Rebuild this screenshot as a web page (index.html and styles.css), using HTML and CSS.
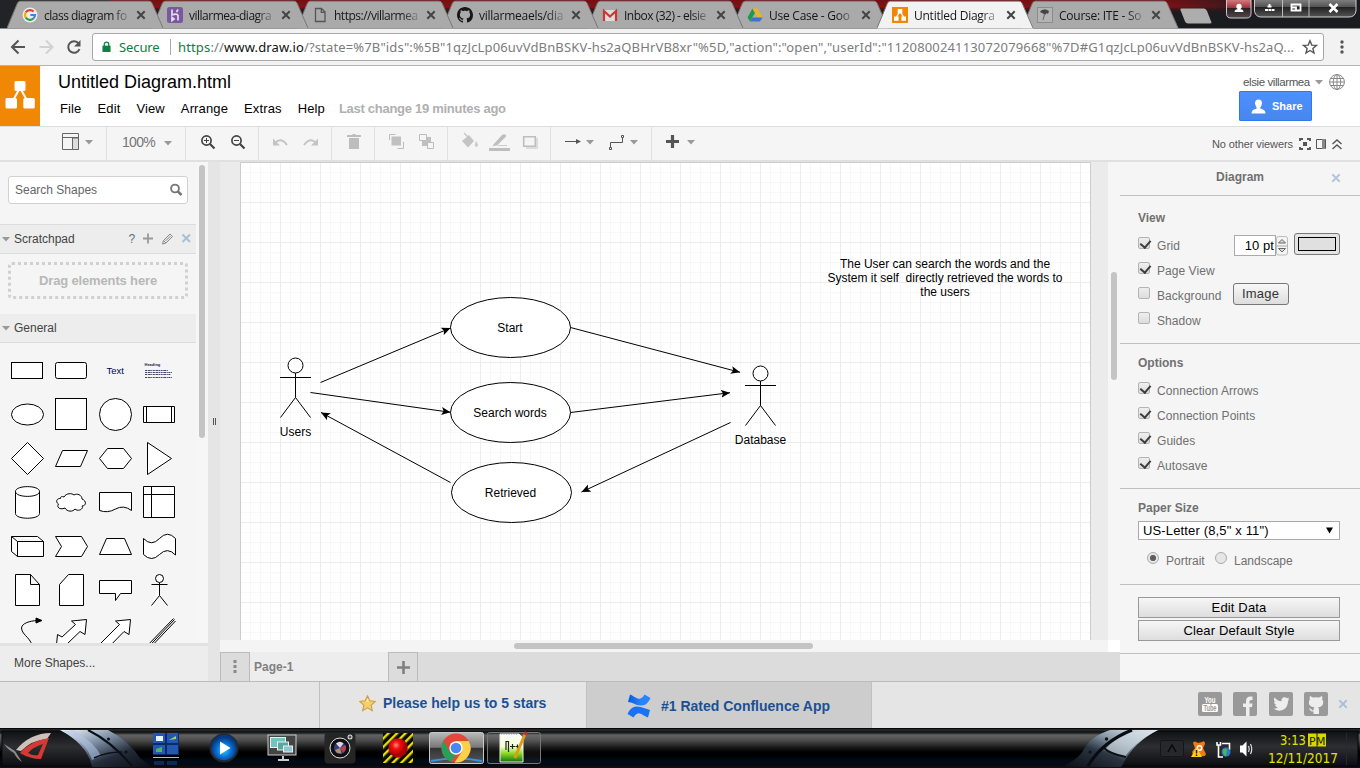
FILE: index.html
```html
<!DOCTYPE html>
<html lang="en">
<head>
<meta charset="utf-8">
<title>Untitled Diagram.html</title>
<link rel="stylesheet" href="styles.css">
</head>
<body>
<svg width="0" height="0" class="defs" aria-hidden="true">
  <defs>
    <symbol id="tab" viewBox="0 0 157 29"><path d="M0 28.5 L10.5 3 Q11.5 1 13.5 1 H142 Q144 1 145 3 L156.5 28.5Z" fill="currentColor"/><path d="M0 28 L10.5 3 Q11.5 1.2 13.5 1.2 H142 Q144 1.2 145 3 L156 28" fill="none" stroke="#777" stroke-width="1"/></symbol>
    <symbol id="x" viewBox="0 0 10 10"><path d="M1.3 1.3 L8.7 8.7 M8.7 1.3 L1.3 8.7" stroke="currentColor" stroke-width="2" fill="none"/></symbol>
    <symbol id="drawio" viewBox="0 0 16 16"><rect width="16" height="16" fill="#f08705"/><path d="M8 4 L4 11 M8 4 L12 11" stroke="#fff" stroke-width="1.4"/><path d="M5.7 2h4.6v4.4H5.7zM2 9.4h4.6v4.4H2zM9.4 9.4H14v4.4H9.4z" fill="#fff"/></symbol>
    <symbol id="caret" viewBox="0 0 8 5"><path d="M0 0H8L4 4.5Z" fill="currentColor"/></symbol>
    <symbol id="github" viewBox="0 0 16 16"><path fill="currentColor" d="M8 0C3.58 0 0 3.58 0 8c0 3.54 2.29 6.53 5.47 7.59.4.07.55-.17.55-.38 0-.19-.01-.82-.01-1.49-2.01.37-2.53-.49-2.69-.94-.09-.23-.48-.94-.82-1.13-.28-.15-.68-.52-.01-.53.63-.01 1.08.58 1.23.82.72 1.21 1.87.87 2.33.66.07-.52.28-.87.51-1.07-1.78-.2-3.64-.89-3.64-3.95 0-.87.31-1.59.82-2.15-.08-.2-.36-1.02.08-2.12 0 0 .67-.21 2.2.82.64-.18 1.32-.27 2-.27s1.36.09 2 .27c1.53-1.04 2.2-.82 2.2-.82.44 1.1.16 1.92.08 2.12.51.56.82 1.27.82 2.15 0 3.07-1.87 3.75-3.65 3.95.29.25.54.73.54 1.48 0 1.07-.01 1.93-.01 2.2 0 .21.15.46.55.38A8.01 8.01 0 0 0 16 8c0-4.42-3.58-8-8-8z"/></symbol>
    <linearGradient id="steel" x1="0" y1="0" x2="1" y2="1"><stop offset="0" stop-color="#f4f8fc"/><stop offset=".35" stop-color="#8092a8"/><stop offset=".65" stop-color="#232c3a"/><stop offset="1" stop-color="#0a0c12"/></linearGradient>
    <linearGradient id="steelR" x1="1" y1="0" x2="0" y2="1"><stop offset="0" stop-color="#f4f8fc"/><stop offset=".35" stop-color="#8c9cac"/><stop offset=".6" stop-color="#2a3440"/><stop offset="1" stop-color="#0a0c12"/></linearGradient>
    <linearGradient id="shell" x1="0" y1="0" x2="0" y2="1"><stop offset="0" stop-color="#101114"/><stop offset=".45" stop-color="#2c2e32"/><stop offset="1" stop-color="#0c0d10"/></linearGradient>
    <linearGradient id="glass" x1="0" y1="0" x2="0" y2="1"><stop offset="0" stop-color="#bbb"/><stop offset=".48" stop-color="#777"/><stop offset=".5" stop-color="#333"/><stop offset="1" stop-color="#555"/></linearGradient>
    <linearGradient id="winbtn" x1="0" y1="0" x2="0" y2="1"><stop offset="0" stop-color="#8a8a8a"/><stop offset=".45" stop-color="#555"/><stop offset=".5" stop-color="#222"/><stop offset="1" stop-color="#555"/></linearGradient>
    <linearGradient id="redbtn" x1="0" y1="0" x2="0" y2="1"><stop offset="0" stop-color="#e08a8e"/><stop offset=".5" stop-color="#9c3038"/><stop offset=".52" stop-color="#2a2024"/><stop offset="1" stop-color="#55484c"/></linearGradient>
    <radialGradient id="play" cx=".5" cy=".6"><stop offset="0" stop-color="#22d0ff"/><stop offset=".6" stop-color="#0a6ad0"/><stop offset="1" stop-color="#063a80"/></radialGradient>
    <radialGradient id="redball" cx=".4" cy=".35"><stop offset="0" stop-color="#ff8a7a"/><stop offset=".4" stop-color="#f41010"/><stop offset="1" stop-color="#a80000"/></radialGradient>
    <pattern id="hazard" width="6" height="6" patternUnits="userSpaceOnUse" patternTransform="rotate(45)"><rect width="6" height="6" fill="#0a0a00"/><rect width="2.4" height="6" fill="#e8e000"/></pattern>
    <linearGradient id="confl" x1="0" y1="0" x2="1" y2="0"><stop offset="0" stop-color="#0a5adf"/><stop offset=".6" stop-color="#2684ff"/></linearGradient>
    <linearGradient id="np" x1="0" y1="0" x2="0" y2="1"><stop offset="0" stop-color="#fff"/><stop offset=".45" stop-color="#f0ffd0"/><stop offset=".7" stop-color="#8ad820"/><stop offset="1" stop-color="#107010"/></linearGradient>
    <pattern id="minor" x="240" y="162" width="10" height="10" patternUnits="userSpaceOnUse"><path d="M.5 0V10M0 .5H10" stroke="#f7f7f7"/></pattern>
    <pattern id="major" x="240" y="162" width="40" height="40" patternUnits="userSpaceOnUse"><path d="M.5 0V40M0 .5H40" stroke="#ececec"/></pattern>
    <marker id="arrow" markerUnits="userSpaceOnUse" markerWidth="10" markerHeight="9" refX="9" refY="4.5" orient="auto"><path d="M0 .5 L9 4.5 L0 8.5 L2 4.5Z" fill="#000"/></marker>
  </defs>
</svg>

<div class="tabstrip">
  <div class="tabs">
    <div class="tab t1"><svg class="tab-shape"><use href="#tab"/></svg>
      <svg class="favicon" viewBox="0 0 16 16"><circle cx="8" cy="8" r="7.5" fill="#eee"/><g fill="none" stroke-width="2.2"><path d="M11.6 4.6A5 5 0 0 0 3.8 5.3" stroke="#dd4437"/><path d="M3.8 5.3a5 5 0 0 0 0 5.4" stroke="#f0b400"/><path d="M3.8 10.7a5 5 0 0 0 7.6.8" stroke="#2a9d50"/><path d="M11.4 11.5A5 5 0 0 0 13 8H8.3" stroke="#4080e8"/></g></svg>
      <span class="tab-title">class diagram fo</span><svg class="tab-close"><use href="#x"/></svg></div>
    <div class="tab t2"><svg class="tab-shape"><use href="#tab"/></svg>
      <svg class="favicon" viewBox="0 0 16 16"><rect width="16" height="16" rx="2.5" fill="#79589f"/><path d="M5 2.5V8q5-2 6 .5V13.500M11 2.500L9.500 5M5 10.500L7 12 5 13.500Z" stroke="#e6def0" stroke-width="1.700" fill="none"/></svg>
      <span class="tab-title">villarmea-diagra</span><svg class="tab-close"><use href="#x"/></svg></div>
    <div class="tab t3"><svg class="tab-shape"><use href="#tab"/></svg>
      <svg class="favicon" viewBox="0 0 16 16"><path d="M3.500 1.500H9.500L13 5V14.500H3.500ZM9.300 1.500V5.300H13" fill="none" stroke="#555" stroke-width="1.300"/></svg>
      <span class="tab-title">https://villarmea</span><svg class="tab-close"><use href="#x"/></svg></div>
    <div class="tab t4"><svg class="tab-shape"><use href="#tab"/></svg>
      <svg class="favicon gh"><use href="#github"/></svg>
      <span class="tab-title">villarmeaels/dia</span><svg class="tab-close"><use href="#x"/></svg></div>
    <div class="tab t5"><svg class="tab-shape"><use href="#tab"/></svg>
      <svg class="favicon" viewBox="0 0 16 16"><path d="M1 3H15V14H1Z" fill="#ddd"/><path d="M2 14V4L8 9.500 14 4V14" fill="none" stroke="#c8392f" stroke-width="2.200"/></svg>
      <span class="tab-title">Inbox (32) - elsie</span><svg class="tab-close"><use href="#x"/></svg></div>
    <div class="tab t6"><svg class="tab-shape"><use href="#tab"/></svg>
      <svg class="favicon" viewBox="0 0 16 16"><path d="M5.500 1.500L.5 10.500 3 14.500 8 5.800Z" fill="#1c9a50"/><path d="M5.500 1.500H10.500L15.500 10.500H10.500Z" fill="#e8b52a"/><path d="M5.500 10.500H15.500L13 14.500H3Z" fill="#3d72d0"/></svg>
      <span class="tab-title">Use Case - Goo</span><svg class="tab-close"><use href="#x"/></svg></div>
    <div class="tab t7 active"><svg class="tab-shape"><use href="#tab"/></svg>
      <svg class="favicon"><use href="#drawio"/></svg>
      <span class="tab-title">Untitled Diagra</span><svg class="tab-close"><use href="#x"/></svg></div>
    <div class="tab t8"><svg class="tab-shape"><use href="#tab"/></svg>
      <svg class="favicon" viewBox="0 0 16 16"><rect width="16" height="16" fill="#8b8b8b"/><rect x="1" y="1" width="14" height="14" fill="#b4b4b4"/><path d="M3 5Q4 2 9 2.500L12 4 11 7 9.500 6 8 8 7 7Z" fill="#444"/><path d="M7.500 7L6 13" stroke="#666"/></svg>
      <span class="tab-title">Course: ITE - So</span><svg class="tab-close"><use href="#x"/></svg></div>
    <svg class="newtab" viewBox="0 0 34 16"><path d="M2 .5H25Q27 .5 28 3L32.500 14.500Q32.500 15.500 31 15.500H9Q7 15.500 6 13.500L1.500 2Q1.200.5 2 .5Z" fill="#adadad"/></svg>
  </div>
  <svg class="winctl" viewBox="1224 0 136 20" width="136" height="20">
    <path d="M1226.500 -2V13.500Q1226.500 18 1231 18H1246.500Q1251 18 1251 13.500V-2Z" fill="url(#redbtn)" stroke="#ccc"/>
    <circle cx="1239" cy="6.500" r="2.700" fill="#fff"/><path d="M1234.500 12Q1234.500 9 1239 9T1243.500 12Z" fill="#fff"/>
    <path d="M1254.500 -2V11.500Q1256 17 1261 17H1349Q1355 17 1356 11V-2Z" fill="url(#winbtn)" stroke="#ccc"/>
    <path d="M1282.500 0V17M1309 0V17" stroke="#bbb"/>
    <path d="M1265 10H1268M1268.500 10H1271M1271.500 10H1274.500M1267.500 6.500H1271.500M1269.500 4V6" stroke="#fff" stroke-width="1.800"/>
    <path d="M1291.500 4.500H1300.500V10.500H1291.500ZM1291.500 7.500H1296V10.500" fill="none" stroke="#fff" stroke-width="1.800"/>
    <path d="M1329.500 4L1337.500 12M1337.500 4L1329.500 12" stroke="#fff" stroke-width="2.600"/>
  </svg>
</div>

<div class="navbar">
  <svg class="nav-icons" viewBox="0 29 92 36" width="92" height="36"><g fill="none" stroke-width="2"><path d="M25 47H12.500M18.500 40.500L12 47L18.500 53.500" stroke="#555"/><path d="M39.500 47H52M46 40.500L52.500 47L46 53.500" stroke="#d2d2d2"/><path d="M78.700 43.500A5.800 5.800 0 1 0 79.500 49" stroke="#555"/></g><path d="M80.500 40V46.500H74Z" fill="#555"/></svg>
  <div class="omnibox">
    <svg viewBox="0 0 10 13" width="9" height="12"><path d="M.5 5H9.500V12H.5Z" fill="#0b8043"/><path d="M2.500 5.500V3.500a2.500 2.500 0 0 1 5 0V5.500" fill="none" stroke="#0b8043" stroke-width="1.400"/></svg>
    <span class="secure">Secure</span><span class="bar"></span>
    <span class="url"><span class="g">https</span>://<span class="k">www.draw.io</span>/?state=%7B"ids":%5B"1qzJcLp06uvVdBnBSKV-hs2aQBHrVB8xr"%5D,"action":"open","userId":"112080024113072079668"%7D#G1qzJcLp06uvVdBnBSKV-hs2aQ...</span>
    <svg class="star" viewBox="0 0 16 16" width="16" height="16"><path d="M8 1.800L9.800 6.100 14.400 6.400 10.900 9.400 12 14 8 11.500 4 14 5.100 9.400 1.600 6.400 6.200 6.100Z" fill="none" stroke="#555" stroke-width="1.400"/></svg>
  </div>
  <svg viewBox="0 0 4 16" width="4" height="16"><g fill="#555"><circle cx="2" cy="3" r="1.700"/><circle cx="2" cy="8" r="1.700"/><circle cx="2" cy="13" r="1.700"/></g></svg>
</div>

<header class="header">
  <svg class="logo" viewBox="0 66 40 60" width="40" height="60"><rect y="66" width="40" height="60" fill="#f08705"/><path d="M20 88L12 102M20 88L28 102" stroke="#fff" stroke-width="2"/><g fill="#fff"><rect x="14.500" y="81" width="11" height="10" rx="1.500"/><rect x="5.500" y="98" width="11.500" height="10.500" rx="1.500"/><rect x="23.300" y="98" width="11.500" height="10.500" rx="1.500"/></g></svg>
  <div class="titles">
    <div class="doc-title">Untitled Diagram.html</div>
    <nav class="menu"><span>File</span><span>Edit</span><span>View</span><span>Arrange</span><span>Extras</span><span>Help</span><span class="status">Last change 19 minutes ago</span></nav>
  </div>
  <div class="account">
    <div class="user"><span class="user-name">elsie villarmea</span><svg class="caret"><use href="#caret"/></svg>
      <svg viewBox="0 0 16 16" width="16" height="16"><g fill="none" stroke="#888"><circle cx="8" cy="8" r="7.400"/><ellipse cx="8" cy="8" rx="3.700" ry="7.400"/><path d="M8 .5V15.500M.5 8H15.500M1.800 4.500H14.200M1.800 11.500H14.200"/></g></svg></div>
    <div class="share"><svg viewBox="0 0 15 15" width="15" height="15"><path d="M7.500 .5Q11 .5 11 4.500Q10.500 7 9.300 8.500V9.500Q14.500 10.500 14.500 14.500H.5Q.5 10.500 5.700 9.500V8.500Q4.500 7 4 4.500Q4 .5 7.500 .5Z" fill="#fff"/></svg><span>Share</span></div>
  </div>
</header>

<div class="toolbar">
  <div class="tgroup g1"><svg viewBox="62 133 18 18" width="18" height="18"><g fill="none" stroke="#666"><path d="M62.500 133.500H78.500V149.500H62.500ZM62.500 137.500H78.500"/></g><path d="M72.500 138V149.500H78.500V138Z" fill="#ddd" stroke="#666"/></svg><svg class="caret"><use href="#caret"/></svg></div>
  <div class="tgroup g2"><span class="zoom">100%</span><svg class="caret"><use href="#caret"/></svg></div>
  <div class="tgroup"><svg viewBox="186 127 72 33" width="72" height="33"><g fill="none" stroke="#444" stroke-width="1.700"><circle cx="206.500" cy="140.500" r="4.600"/><circle cx="236.500" cy="140.500" r="4.600"/></g><path d="M210 144L214.500 148.500M240 144L244.500 148.500" stroke="#444" stroke-width="2.200"/><path d="M204 140.500H209M206.500 138V143M234 140.500H239" stroke="#444"/></svg></div>
  <div class="tgroup"><svg viewBox="259 127 72 33" width="72" height="33"><g fill="none" stroke="#c4c4c4" stroke-width="2"><path d="M276 142Q282 137.500 287 145"/><path d="M315 142Q309 137.500 304 145"/></g><path d="M273 138.500V145.500H280ZM318 138.500V145.500H311Z" fill="#c4c4c4"/></svg></div>
  <div class="tgroup"><svg viewBox="332 127 42 33" width="42" height="33"><path d="M347 135H352L353 134H355L356 135H361V137H347ZM349 138H359V149H349Z" fill="#bdbdbd"/></svg></div>
  <div class="tgroup"><svg viewBox="375 127 72 33" width="72" height="33"><path d="M391.500 136.500H401V145.500H391.500ZM422 137H431V146H422Z" fill="#c0c0c0"/><g stroke="#bcbcbc"><path d="M389.500 140V134.500H395.500M403.500 142V148.500H397.500" fill="none"/><path d="M419.500 134.500H426.500V140.500H419.500ZM427.500 142.500H433.500V148.500H427.500Z" fill="#f5f5f5"/></g></svg></div>
  <div class="tgroup"><svg viewBox="448 127 102 33" width="102" height="33"><path d="M462 141L469 135 474 141 468 147.500Z" fill="#c4c4c4"/><path d="M464 133L469 138" stroke="#c4c4c4" stroke-width="1.300"/><path d="M476 141Q479 145 477.500 146.500T474.500 145Z" fill="#ccc"/><path d="M489 148H510V151H489ZM493 145L502 135Q505 133 506.500 136L497 145.500 492.500 146Z" fill="#bebebe"/><path d="M498 145.500H507" stroke="#ccc"/><path d="M526 138H538V149H526Z" fill="#dcdcdc"/><path d="M523.700 136.700H535.300V146.300H523.700Z" fill="#f5f5f5" stroke="#bebebe" stroke-width="1.600"/></svg></div>
  <div class="tgroup"><svg viewBox="551 127 100 33" width="100" height="33"><path d="M565 141.500H577" stroke="#555"/><path d="M576 139L581 141.500 576 144Z" fill="#555"/><path d="M610.500 147V142.500H622.500V138" fill="none" stroke="#555"/><path d="M609.500 147.500H611.500V149.500H609.500ZM621.500 135.500H623.500V137.500H621.500Z" fill="none" stroke="#555"/><path d="M586 140H594L590 144.500ZM630 140H638L634 144.500Z" fill="#999"/></svg></div>
  <div class="tgroup last"><svg viewBox="652 127 60 33" width="60" height="33"><path d="M666 141.500H679M672.500 135V148" stroke="#555" stroke-width="3.200"/><path d="M687 140H695L691 144.500Z" fill="#999"/></svg></div>
  <div class="viewers"><span>No other viewers</span><svg viewBox="1298 136 46 16" width="46" height="16"><path d="M1300 141V139H1303M1307 139H1310V141M1300 147V149H1303M1307 149H1310V147" fill="none" stroke="#555" stroke-width="1.800"/><rect x="1303" y="142" width="4" height="4" fill="#555"/><path d="M1316.500 139.500H1325.500V148.500H1316.500Z" fill="none" stroke="#555"/><path d="M1322 139H1325V149H1322Z" fill="#888"/><path d="M1332.500 144L1337 140 1341.500 144M1332.500 149L1337 145 1341.500 149" fill="none" stroke="#555" stroke-width="1.400"/></svg></div>
</div>

<main class="workspace">
  <aside class="sidebar">
    <div class="side-body">
      <div class="side-content">
        <div class="search"><span>Search Shapes</span><svg viewBox="0 0 14 14" width="14" height="14"><circle cx="6" cy="5.500" r="3.900" fill="none" stroke="#777" stroke-width="1.900"/><path d="M8.800 8.300L12.500 12" stroke="#777" stroke-width="2.600"/></svg></div>
        <div class="section-title first"><svg class="caret"><use href="#caret"/></svg><span>Scratchpad</span>
          <svg class="pad-tools" viewBox="126 231 68 14" width="68" height="14"><path d="M143 237.500H153M148 232.500V242.500" stroke="#999" stroke-width="1.800"/><path d="M162.500 243L163.500 239.500 170 233 172.500 235.500 166 242ZM163.500 239.500L166 242M165.500 240L170.500 235" stroke="#888" fill="none"/><path d="M182.500 233.500L190 241M190 233.500L182.500 241" stroke="#a9bfd6" stroke-width="2"/><text x="128.500" y="241.500" font-size="12" fill="#557088">?</text></svg></div>
        <div class="dropzone">Drag elements here</div>
        <div class="section-title"><svg class="caret"><use href="#caret"/></svg><span>General</span></div>
        <div class="shapes">
          <svg><rect x="-15.500" y="-7.500" width="31" height="16"/></svg>
          <svg><rect x="-15.500" y="-7.500" width="31" height="16" rx="2"/></svg>
          <svg><text class="txt" x="-8.500" y="4">Text</text></svg>
          <svg><text class="head" x="-14.500" y="-4">Heading</text><path class="lines" d="M-14 0.500H9M-14 2.500H13M-14 4.500H12M-14 7.500H13"/></svg>
          <svg><ellipse rx="16" ry="10.500" cx=".5" cy=".5"/></svg>
          <svg><rect x="-15.500" y="-15.500" width="31" height="31"/></svg>
          <svg><circle r="16" cx=".5" cy=".5"/></svg>
          <svg><path d="M-15.500 -7.500H15.500V8.500H-15.500ZM-12.500 -7.500V8.500M12.500 -7.500V8.500"/></svg>
          <svg><path d="M.5 -15.500L16.500 .5 .5 16.500 -15.500 .5Z"/></svg>
          <svg><path d="M-8.500 -7.500H16.500L9.500 8.500H-15.500Z"/></svg>
          <svg><path d="M-7.500 -9.500H8.500L16.500 .5 8.500 10.500H-7.500L-15.500 .5Z"/></svg>
          <svg><path d="M-11.500 -15.500L12.500 .5 -11.500 16.500Z"/></svg>
          <svg><path d="M-11.500 -10.500V11.500C-11.500 17.800 12.500 17.800 12.500 11.500V-10.500C12.500 -17 -11.500 -17 -11.500 -10.500C-11.500 -4 12.500 -4 12.500 -10.500"/></svg>
          <svg><path d="M-7 -5C-5 -9 1 -9 3 -7C6 -9 11 -7 11 -3C16 -1 15 4 11 4C13 7 7 10 4 7C2 10 -4 10 -6 6C-10 8 -15 6 -12.500 2C-16 0 -14 -4 -10.500 -3.500C-11 -5 -9 -6 -7 -5Z"/></svg>
          <svg><path d="M-15.500 -9.500H16.500V8.500Q8.500 2.500 .5 7T-15.500 8.500Z"/></svg>
          <svg><path d="M-15.500 -15.500H15.500V15.500H-15.500ZM-15.500 -7.500H15.500M-7.500 -15.500V15.500"/></svg>
          <svg><path d="M-15.500 -9.500H10.500L16.500 -4.500V10.500H-9.500L-15.500 5.500ZM-15.500 -9.500L-9.500 -4.500H16.500M-9.500 -4.500V10.500"/></svg>
          <svg><path d="M-15.500 -9.500H10.500L16.500 .5 10.500 10.500H-15.500L-9.500 .5Z"/></svg>
          <svg><path d="M-8.500 -7.500H9.500L16.500 8.500H-15.500Z"/></svg>
          <svg><path d="M-15.500 -7.500Q-7.500 1 .5 -7.500T16.500 -7.500V9Q8.500 .5 .5 8.500T-15.500 8.500Z"/></svg>
          <svg><path d="M-11.500 -15.500H3.500L12.500 -5.500V15.500H-11.500ZM3.500 -15.500V-5.500H12.500"/></svg>
          <svg><path d="M-2.500 -15.500H12.500V15.500H-11.500V-5.500Z"/></svg>
          <svg><path d="M-15.500 -9.500H16.500V3.500H5.500L.5 10.500V3.500H-15.500Z"/></svg>
          <svg><circle cx=".5" cy="-11.500" r="4"/><path d="M.5 -7.500V5.500L-7.500 15.500M.5 5.500L8.500 15.500M-7.500 -5.500H8.500"/></svg>
          <svg><path class="nofill" d="M5.500 16C6 4 -5 2 -5.500 -6C-5 -11 3 -13 10 -13.500"/><path class="solid" d="M9 -16L15 -13.500 9 -11Z"/></svg>
          <svg><path d="M15.500 -14.500L.5 -13 4.500 -9.500 -9 3 -13.500 .5 -15 16 0 14 -4 10 9 -2.500 14 .5Z"/></svg>
          <svg><path d="M15.500 -14.500L.5 -13 4.500 -9.500 -18 13 -10 17 9 -2.500 14 .5Z"/></svg>
          <svg><path d="M-15 15L14.500 -15.500M-12 17L16.500 -13M-13.500 16L15.500 -14.500"/></svg>
        </div>
      </div>
      <div class="vtrack"><div class="vthumb side-thumb"></div></div>
    </div>
    <div class="more">More Shapes...</div>
  </aside>
  <div class="splitter"><i></i><i></i></div>

  <section class="center">
    <div class="canvas-row">
      <svg class="canvas" viewBox="220 162 888 478" width="888" height="478">
        <rect x="240" y="161" width="851" height="480" fill="#fff"/>
        <rect x="240" y="162" width="850" height="478" fill="url(#minor)"/>
        <rect x="240" y="162" width="850" height="478" fill="url(#major)"/>
        <path d="M240.500 640V162.500H1090.500V640" fill="none" stroke="#ccc"/>
        <g fill="#fff" stroke="#000">
          <ellipse cx="510.500" cy="327.500" rx="60" ry="30"/><ellipse cx="510.500" cy="412.500" rx="60" ry="30"/><ellipse cx="511.500" cy="492.500" rx="60" ry="30"/>
          <circle cx="295.500" cy="365.500" r="7.500"/><circle cx="760.500" cy="373.500" r="7.500"/>
          <path d="M295.500 373V397.500L280.500 417.500M295.500 397.500L310.500 417.500M280 377.500H311M760.500 381V405.500L745.500 425.500M760.500 405.500L775.500 425.500M745 385.500H776" fill="none"/>
          <g marker-end="url(#arrow)" fill="none"><path d="M320.500 382.500L450.500 328"/><path d="M310.500 392.500L450.500 412.300"/><path d="M450.500 482.500L321 412.500"/><path d="M570.500 327.500L740 372.300"/><path d="M570.500 412.500L730 392.700"/><path d="M730.500 422.500L581.500 492"/></g>
        </g>
        <g class="labels"><text x="510" y="332">Start</text><text x="510" y="417">Search words</text><text x="510.500" y="497">Retrieved</text><text x="295.500" y="436">Users</text><text x="760.500" y="444">Database</text>
          <text x="945" y="268">The User can search the words and the</text><text x="945" y="282" textLength="235">System it self &#160;directly retrieved the words to</text><text x="945" y="296">the users</text></g>
      </svg>
      <div class="vtrack canvas-track"><div class="vthumb canvas-thumb"></div></div>
    </div>
    <div class="htrack"><div class="hthumb"></div><div class="corner"></div></div>
    <div class="pages"><div class="page-btn"><svg viewBox="0 0 4 14" width="4" height="14"><path d="M.5 0H3.500V3H.5ZM.5 5H3.500V8H.5ZM.5 10H3.500V13H.5Z" fill="#888"/></svg></div><div class="page-tab">Page-1</div><div class="page-btn add"><svg viewBox="0 0 13 13" width="13" height="13"><path d="M0 6.500H13M6.500 0V13" stroke="#808080" stroke-width="2.600"/></svg></div></div>
  </section>

  <aside class="format">
    <div class="fmt-title"><span>Diagram</span><svg class="fmt-close"><use href="#x"/></svg></div>
    <div class="fsec view">
      <h3>View</h3>
      <div class="row"><i class="cb on"></i><span>Grid</span><div class="grid-tools"><span class="num">10 pt</span><svg viewBox="0 0 12 20" width="12" height="20"><rect x=".5" y=".5" width="11" height="18.500" rx="2" fill="#f4f4f4" stroke="#bbb"/><path d="M.5 10H11.500" stroke="#aaa"/><path d="M2.500 7H9.500L6 3.500ZM2.500 12.500H9.500L6 16Z" fill="#ddd" stroke="#666"/></svg><span class="swatch"><b></b></span></div></div>
      <div class="row"><i class="cb on"></i><span>Page View</span></div>
      <div class="row"><i class="cb"></i><span>Background</span><span class="btn-image">Image</span></div>
      <div class="row"><i class="cb"></i><span>Shadow</span></div>
    </div>
    <div class="fsec options">
      <h3>Options</h3>
      <div class="row"><i class="cb on"></i><span>Connection Arrows</span></div>
      <div class="row"><i class="cb on"></i><span>Connection Points</span></div>
      <div class="row"><i class="cb on"></i><span>Guides</span></div>
      <div class="row"><i class="cb on"></i><span>Autosave</span></div>
    </div>
    <div class="fsec paper">
      <h3>Paper Size</h3>
      <div class="select"><span>US-Letter (8,5" x 11")</span><svg viewBox="0 0 7 7" width="7" height="7"><path d="M0 .5H7L3.500 6.500Z"/></svg></div>
      <div class="radios"><i class="radio on"></i><span class="r1">Portrait</span><i class="radio"></i><span>Landscape</span></div>
    </div>
    <div class="fsec buttons"><div class="btn">Edit Data</div><div class="btn">Clear Default Style</div></div>
  </aside>
</main>

<footer class="footer">
  <div class="f-empty"></div>
  <div class="f-stars"><svg viewBox="0 0 16 16" width="17" height="17"><path d="M8 .8L10.200 5.500 15.300 6 11.500 9.500 12.500 14.700 8 12.100 3.500 14.700 4.500 9.500 .7 6 5.800 5.500Z" fill="#f3cf68" stroke="#cf9c44"/><path d="M8 3L9.300 6.300H6.700Z" fill="#fff3b8"/></svg><span>Please help us to 5 stars</span></div>
  <div class="f-confluence"><svg viewBox="0 0 24 24" width="24" height="24"><path d="M3 .5C7 2 11 6 13.500 4.500Q16 3.500 17.500 .5L23.500 4Q20 12 14 11.500C9 11.500 5 8 1 8Z" fill="url(#confl)"/><path d="M21 23.500C17 22 13 18 10.500 19.500Q8 20.500 6.500 23.500L.5 20Q4 12 10 12.500C15 12.500 19 15 23 16Z" fill="#1872f2"/></svg><span>#1 Rated Confluence App</span></div>
  <div class="f-social">
    <svg viewBox="0 0 24 24"><rect width="24" height="24" rx="2" fill="#999"/><text class="yt" x="12" y="10.500" textLength="11" lengthAdjust="spacingAndGlyphs" fill="#fff">You</text><rect x="4" y="12" width="16" height="8" rx="1.500" fill="#fff"/><text class="yt" x="12" y="19" textLength="13" lengthAdjust="spacingAndGlyphs" fill="#999">Tube</text></svg>
    <svg viewBox="0 0 24 24"><rect width="24" height="24" rx="2" fill="#999"/><path d="M13 24V15H10V11.500H13V9Q13 4.500 17.500 4.500H19.500V8H18Q16.500 8 16.500 9.500V11.500H19.500L19 15H16.500V24Z" fill="#eee"/></svg>
    <svg viewBox="0 0 24 24"><rect width="24" height="24" rx="2" fill="#999"/><path d="M4 16.500Q7 17 9 15.500Q6.500 15 6 13H7.500Q5 12 5 9.500L6.500 10Q4 8 5.500 5.500Q8.500 9 12.500 9.200Q12 5.500 15.500 5.200Q17 5 18 6.200L20 5.500 19 7.500 20.500 7.200 19 9Q19 14 15.500 17Q10 20.500 4 16.500Z" fill="#eee"/></svg>
    <svg viewBox="0 0 24 24"><rect width="24" height="24" rx="2" fill="#999"/><path d="M6 4L9 5.500Q12 4.800 15 5.500L18 4Q18.700 6 18.200 7.500Q20 9 19 12Q18 15 14 15.300Q15 16 15 18V22H9.500V19.500Q7 20 6 18L5 16.500Q7 16 7.500 17.500T9.500 18Q9.500 16 10.500 15.300Q6 15 5 12Q4.500 9 5.800 7.500Q5.300 6 6 4Z" fill="#eee"/></svg>
    <svg class="f-close"><use href="#x"/></svg>
  </div>
</footer>

<div class="taskbar">
  <svg viewBox="0 728 600 40" width="600" height="40">
    <path d="M2 731H100L150 766H2Z" fill="url(#shell)" stroke="#08080a"/>
    <path d="M60 730H108Q128 740 140 758L152 767H92Q88 745 60 730Z" fill="url(#steel)"/>
    <path d="M74 730Q95 743 101 756L92 760Q86 741 62 731Z" fill="#b5c6e6" opacity=".55"/>
    <path d="M94 758Q106 752 122 752" stroke="#0c1018" stroke-width="1.500" fill="none"/><path d="M88 730Q112 742 132 766" stroke="#0a0e16" stroke-width="2" fill="none"/><circle cx="108.500" cy="739" r="1.500" fill="#111"/><circle cx="126" cy="752" r="1.500" fill="#111"/>
    <path d="M4 744L15 751 22 762Q16 758 14 753Q8 750 4 744Z" fill="#8a8a8c"/><path d="M16 750Q30 733 51 733L47 739Q32 740 21 751Z" fill="#cfc0bc"/><path d="M20 753Q30 741 49 738L41 759Q30 759 20 753ZM28 753Q33 756 38 755L43 744Q33 747 28 753Z" fill="#d43a34" fill-rule="evenodd"/>
    <g><rect x="153" y="733" width="26" height="22" fill="#0a2a68"/><path d="M153 733H165V743H153ZM167 733H178V743H167ZM153 745H165V754H153ZM167 745H178V754H167Z" fill="#2458b0"/><path d="M156 736H163V741H156Z" fill="#e8f2fa"/><path d="M169 740L176 736V739Z" fill="#a0d070"/><path d="M156 749L162 747V752H156Z" fill="#50b070"/><path d="M153 757.500H179" stroke="#bbb"/><path d="M154 761H164V765H154ZM167 761H177V765H167Z" fill="#0c2a58"/></g>
    <circle cx="224" cy="748" r="14.500" fill="#24282e"/><circle cx="224" cy="747.500" r="12.800" fill="url(#play)"/><path d="M220 741.500L230.500 748 220 754.500Z" fill="#fff"/>
    <rect x="268" y="735" width="28" height="20" fill="#444" stroke="#ccc"/><rect x="270.500" y="737.500" width="15" height="10" fill="#72c4c0" stroke="#eee"/><rect x="277.500" y="742" width="11" height="8" fill="#58a8a0" stroke="#eee"/><rect x="283.500" y="746" width="9" height="6" fill="#8cc8d0" stroke="#eee"/><path d="M278 760H289M283 756V760" stroke="#ccc" stroke-width="2"/>
    <rect x="324.500" y="732.500" width="31" height="31" rx="4" fill="#252526"/><circle cx="340" cy="748" r="10" fill="#101010" stroke="#ddd"/><circle cx="340" cy="748" r="6" fill="#303c8c"/><path d="M340 748L336 743.500Q340 740 343.500 743.500Z" fill="#e0d6d8"/><path d="M340 748L345.500 745Q347.500 750 343 752.500Z" fill="#b84050"/><path d="M340 748L341.500 753.500Q336.500 754 335 750Z" fill="#b0905c"/><circle cx="350" cy="737" r="2.500" fill="#ddd"/><path d="M348.500 737H351.500M350 735.500V738.500" stroke="#222"/>
    <rect x="383" y="733" width="30" height="30" fill="url(#hazard)"/><circle cx="398" cy="748" r="9.700" fill="url(#redball)"/>
    <rect x="429.500" y="732.500" width="54" height="31" rx="2" fill="url(#glass)" stroke="#c8c8c8"/><path d="M431 761Q456 756 482 761" stroke="#3098e8" stroke-width="2" fill="none"/>
    <circle cx="456" cy="748" r="14.500" fill="#e0483a"/><path d="M443.500 740.700L450 752 456 755 451 761.600A14.500 14.500 0 0 1 443.500 740.700Z" fill="#28a05a"/><path d="M456 741H468.700A14.500 14.500 0 0 1 454.500 762.500L462 751.500Z" fill="#fcd04a"/><circle cx="456" cy="748" r="6.700" fill="#fff"/><circle cx="456" cy="748" r="5.300" fill="#4688f0"/>
    <rect x="487.500" y="732.500" width="53" height="31" rx="2" fill="#fff" fill-opacity=".06" stroke="#777"/><path d="M500 734H519L523 738V762H500Z" fill="url(#np)" stroke="#eee"/><path d="M501 734H517" stroke="#888" stroke-dasharray="1 1.500"/><path d="M506 750V741.500H508.500V752M510 746.500H515M512.500 744V749M515.500 746.500H519.500M517.500 744.500V748.500" stroke="#222" fill="none" stroke-width="1.200"/><path d="M525.500 733L516.500 754 515 758" stroke="#e09a20" stroke-width="3" fill="none"/><path d="M526.500 732L525 735" stroke="#b83040" stroke-width="3.500"/>
  </svg>
  <svg class="tray" viewBox="1060 728 300 40" width="300" height="40">
    <path d="M1150 731H1358V766H1115Z" fill="url(#shell)" stroke="#050507"/>
    <path d="M1110 730H1158Q1134 742 1123 764L1121 767H1062Q1080 758 1084 749Q1090 737 1110 730Z" fill="url(#steelR)"/>
    <path d="M1158 730Q1134 742 1125 757L1104 750Q1118 735 1140 730Z" fill="#d2dde4" opacity=".65"/><path d="M1126 757Q1110 754 1104 748" stroke="#0c1018" stroke-width="2" fill="none"/><path d="M1132 730Q1102 742 1088 766" stroke="#080c12" stroke-width="3" fill="none"/><circle cx="1106.500" cy="739" r="1.700" fill="#111"/><circle cx="1090" cy="752" r="1.500" fill="#111"/>
    <rect x="1160.500" y="740.500" width="23" height="16" rx="2" fill="#26282b" stroke="#141517"/><path d="M1168 752L1172 745 1176 752" stroke="#08090a" stroke-width="1.500" fill="none"/>
    <path d="M1193 743Q1194 740 1198 743L1202 742Q1205 740 1205 744L1203 748 1206 754Q1205 757 1202 756L1194 756 1192 752 1195 748Z" fill="#f27a14"/><circle cx="1199.500" cy="748" r="2.200" fill="none" stroke="#fff" stroke-width="1.500"/><path d="M1191 757L1196.500 747 1202 757Z" fill="#fad018"/><path d="M1196.500 750V753.500M1196.500 754.500V756" stroke="#222" stroke-width="1.500"/>
    <path d="M1217 742V745H1220.500V742M1218.500 745V757H1223M1222 743.500H1229.500V750" fill="none" stroke="#fff" stroke-width="1.600"/><circle cx="1226" cy="752" r="4.500" fill="#2c78d0"/><path d="M1223 749Q1228 748 1227 751T1226 756 1223 753Z" fill="#48b848"/>
    <path d="M1240 745.500H1242.500L1246.500 741.500V756.500L1242.500 752.500H1240Z" fill="#fff"/><path d="M1248.500 746Q1250 749 1248.500 752M1250.500 744Q1253 749 1250.500 754" stroke="#ddd" fill="none" stroke-width="1.200"/>
    <rect x="1308" y="733.500" width="8.500" height="13" fill="#d8d800"/><rect x="1317.500" y="733.500" width="8.500" height="13" fill="#d8d800"/>
    <g class="clock"><text x="1280" y="745" textLength="26" lengthAdjust="spacingAndGlyphs">3:13</text><text x="1309" y="744.500" textLength="16.500" class="pm">PM</text><text x="1268" y="763" textLength="70" lengthAdjust="spacingAndGlyphs">12/11/2017</text></g>
    <path d="M1346.500 733V765" stroke="#25282c"/>
  </svg>
</div>
</body>
</html>
```
FILE: styles.css
```css
* { box-sizing: border-box; }
body { margin: 0; width: 1360px; height: 768px; overflow: hidden; display: flex; flex-direction: column; font-family: "Liberation Sans", Arial, sans-serif; font-size: 12px; color: #000; background: #fff; }
svg { flex: none; display: block; }
.defs { position: absolute; }

/* browser tabs */
.tabstrip { height: 29px; flex: none; display: flex; justify-content: space-between; background: linear-gradient(90deg, #222326 0, #26272a 108px, transparent 112px, transparent 1160px, #1b1c20 1270px), linear-gradient(#740f12 0, #821316 7px, #4a1113 9px, #1b1c20 13px); border-bottom: 1px solid #8a8a8a; }
.tabs { display: flex; padding-left: 7px; height: 28px; }
.tab { position: relative; width: 157px; margin-right: -12px; height: 28px; display: flex; align-items: center; padding: 2px 0 0 15px; color: #aaa; flex: none; }
.tab-shape { position: absolute; left: 0; top: 0; width: 157px; height: 29px; }
.t1 { z-index: 8; } .t2 { z-index: 7; } .t3 { z-index: 6; } .t4 { z-index: 5; } .t5 { z-index: 4; } .t6 { z-index: 3; } .t8 { z-index: 1; }
.tab.active { z-index: 10; color: #f2f2f2; }
.favicon { width: 16px; height: 16px; position: relative; }
.gh { color: #181818; }
.tab-title { position: relative; width: 90px; margin-left: 6px; white-space: nowrap; color: #161616; font: 12px "Open Sans", "Noto Sans", sans-serif; letter-spacing: -.5px; -webkit-mask-image: linear-gradient(90deg, #000 75%, rgba(0,0,0,.12) 96%); mask-image: linear-gradient(90deg, #000 75%, rgba(0,0,0,.12) 96%); }
.tab-close { position: relative; width: 10px; height: 10px; margin-left: 2px; color: #444; }
.t4 .tab-title, .t6 .tab-title, .t7 .tab-title, .t8 .tab-title { letter-spacing: -.25px; }
.newtab { width: 34px; height: 16px; margin: 8px 0 0 12px; }
.winctl { width: 136px; }

/* address bar */
.navbar { height: 37px; flex: none; display: flex; align-items: center; background: #f2f2f2; border-bottom: 1px solid #b4b4b4; }
.omnibox { width: 1232px; height: 28px; border: 1px solid #a8a8a8; border-radius: 3px; background: #fff; display: flex; align-items: center; padding-left: 9px; margin-right: 16px; font: 14px "Noto Sans", sans-serif; color: #7c7c7c; }
.secure { color: #0b8043; margin-left: 8px; width: 41px; font-size: 13px; letter-spacing: -.1px; }
.bar { width: 1px; height: 16px; background: #aaa; margin: 0 7px 0 10px; }
.url { width: 1115px; white-space: nowrap; font-size: 13px; letter-spacing: .145px; }
.url .g { color: #0b8043; } .url .k { color: #111; }
.star { margin-left: 9px; }

/* application header */
.header { height: 60px; flex: none; display: flex; background: #fff; }
.titles { flex: 1; padding: 5px 0 0 18px; }
.doc-title { font-size: 18px; line-height: 22px; }
.menu { display: flex; gap: 16px; padding: 7px 0 0 2px; font-size: 13px; line-height: 17px; letter-spacing: .13px; }
.menu .status { color: #b0b0b0; font-weight: bold; margin-left: -2px; letter-spacing: -.28px; }
.account { width: 122px; padding-top: 7px; }
.user { display: flex; align-items: center; height: 18px; margin-left: 5px; color: #555; font-size: 11.500px; }
.user-name { width: 67px; letter-spacing: -.4px; white-space: nowrap; }
.user .caret { margin: 0 6px 0 5px; }
.caret { width: 8px; height: 5px; color: #999; }
.share { width: 73px; height: 30px; margin-left: 1px; display: flex; align-items: center; gap: 6px; padding-left: 11px; color: #fff; font-weight: bold; font-size: 11px; background: linear-gradient(#4d90fe, #4787ed); border: 1px solid #3079ed; border-radius: 1px; }

/* toolbar */
.toolbar { height: 36px; flex: none; display: flex; background: #f5f5f5; border-top: 1px solid #ddd; border-bottom: 2px solid #e0e0e0; }
.tgroup { display: flex; align-items: center; border-right: 1px solid #e0e0e0; flex: none; }
.g1 { width: 107px; padding: 0 0 3px 62px; } .g1 .caret { margin: 1px 0 0 5px; }
.g2 { width: 79px; padding: 0 0 4px 15px; color: #777; font-size: 14px; } .g2 .caret { margin: 3px 0 0 9px; }
.zoom { width: 33px; letter-spacing: -.7px; }
.last { border: 0; }
.viewers { margin-left: auto; width: 148px; display: flex; align-items: center; color: #555; font-size: 11px; justify-content: space-between; padding-right: 16px; }
.viewers span { white-space: nowrap; letter-spacing: -.1px; }

/* workspace */
.workspace { height: 519px; flex: none; display: flex; }
.sidebar { width: 208px; display: flex; flex-direction: column; background: #f5f5f5; }
.side-body { height: 481px; display: flex; overflow: hidden; }
.side-content { width: 196px; }
.search { margin: 14px 8px 0; width: 180px; height: 28px; border: 1px solid #d2d2d2; border-radius: 3px; background: #fff; display: flex; align-items: center; justify-content: space-between; padding: 0 4px 0 6px; color: #666; }
.section-title { height: 29px; display: flex; align-items: center; background: #ededed; border-bottom: 1px solid #ddd; padding-left: 2px; color: #444; margin-top: 15px; }
.section-title .caret { margin-right: 4px; }
.section-title.first { margin-top: 20px; height: 30px; border-top: 1px solid #ddd; }
.pad-tools { margin-left: auto; margin-right: 2px; }
.dropzone { margin: 8px 8px 0; height: 37px; width: 180px; border: 3px dotted #d0d0d0; border-radius: 4px; color: #b8b8b8; font-weight: bold; font-size: 13px; letter-spacing: -.15px; display: flex; align-items: center; justify-content: center; }
.shapes { margin: 5px 0 0 5px; display: grid; grid-template-columns: repeat(4, 44px); grid-auto-rows: 44px; }
.shapes svg { width: 44px; height: 44px; padding: 22px 0 0 22px; overflow: visible; fill: #fff; stroke: #000; stroke-width: 1; }
.shapes .nofill { fill: none; } .shapes .solid { fill: #000; }
.shapes .txt { font-size: 9.500px; fill: #006; stroke: none; } .shapes .head { font-size: 4px; font-weight: bold; fill: #224; stroke: none; }
.shapes .lines { stroke: #446; stroke-dasharray: 2 .7 3 .5 1 .6; }
.vtrack { width: 12px; background: #f6f6f6; padding: 3px; }
.vthumb { width: 6px; border-radius: 3px; background: #c4c4c4; }
.side-thumb { height: 273px; }
.more { height: 38px; border-top: 3px solid #e2e2e2; background: #ededed; padding: 10px 14px; color: #444; line-height: 15px; }
.splitter { width: 12px; background: #e5e5e5; display: flex; justify-content: center; align-items: center; gap: 1px; }
.splitter i { width: 1px; height: 7px; background: #555; }
.center { width: 900px; display: flex; flex-direction: column; }
.canvas-row { height: 478px; display: flex; background: #ebebeb; }
.labels { font-size: 12px; text-anchor: middle; }
.canvas-thumb { height: 108px; margin-top: 107px; }
.htrack { height: 12px; display: flex; background: #f4f4f4; }
.hthumb { width: 299px; height: 6px; margin: 3px 295px 0 294px; border-radius: 3px; background: #c4c4c4; }
.corner { width: 12px; background: #fff; }
.pages { height: 29px; background: #dcdcdc; display: flex; }
.page-btn { width: 30px; border: 1px solid #bbb; border-bottom: 0; display: flex; align-items: center; justify-content: center; }
.page-tab { width: 138px; background: #ededed; color: #808080; font-weight: bold; padding: 8px 4px; line-height: 14px; }

/* format panel */
.format { width: 240px; background: #f5f5f5; color: #707070; }
.fmt-title { height: 34px; border-bottom: 1px solid #c0c0c0; display: flex; align-items: center; justify-content: center; font-weight: bold; padding-bottom: 4px; position: relative; }
.fmt-close { position: absolute; right: 19px; top: 11px; width: 10px; height: 10px; color: #b4c6da; }
.fsec { border-bottom: 1px solid #c0c0c0; padding: 12px 20px 0 18px; }
.fsec h3 { margin: 0; height: 20px; line-height: 20px; font-size: 12px; }
.view { height: 148px; } .options { height: 145px; padding-top: 9px; } .paper { height: 96px; padding-top: 9px; } .buttons { height: 69px; padding-top: 12px; }
.row { height: 25px; display: flex; align-items: center; white-space: nowrap; letter-spacing: .05px; }
.view h3 { margin-bottom: 5px; } .options h3 { margin-bottom: 5px; }
.cb { width: 12px; height: 12px; border: 1px solid #b4b4b4; border-radius: 2px; background: linear-gradient(#eee, #ddd); margin: 0 7px 5px 0; position: relative; flex: none; }
.cb.on::after { content: ""; position: absolute; left: 3px; top: 0; width: 5px; height: 8px; border: solid #3c3c3c; border-width: 0 2.500px 2.500px 0; transform: rotate(40deg); }
.grid-tools { display: flex; align-items: center; margin-left: auto; color: #000; font-size: 13px; }
.num { width: 42px; height: 21px; line-height: 19px; border: 1px solid #aaa; background: #fff; text-align: right; padding-right: 1px; }
.swatch { width: 46px; height: 22px; margin: -3px 0 0 6px; border: 1px solid #777; border-radius: 3px; padding: 3px; background: #e4e4e4; }
.swatch b { display: block; height: 14px; border: 1px solid #000; background: #e0e0e0; }
.btn-image { width: 56px; height: 22px; line-height: 19px; margin: -4px 0 0 11px; border: 1px solid #777; border-radius: 3px; background: linear-gradient(#f8f8f8, #ddd); text-align: center; font-size: 13px; color: #333; letter-spacing: .2px; }
.select { height: 19px; margin-top: 3px; border: 1px solid #aaa; background: #fff; color: #000; font-size: 13px; display: flex; align-items: center; justify-content: space-between; padding: 0 6px 0 4px; letter-spacing: .15px; }
.radios { display: flex; align-items: center; padding: 12px 0 0 9px; }
.radio { width: 12px; height: 12px; border: 1px solid #aaa; border-radius: 50%; background: #e6e6e6; margin: 0 7px 5px 0; }
.radio.on { background: radial-gradient(#555 0, #666 2.800px, #e6e6e6 3.500px); }
.r1 { width: 49px; }
.btn { height: 21px; margin-bottom: 2px; border: 1px solid #999; background: linear-gradient(#f6f6f6, #dedede); color: #000; font-size: 13px; line-height: 19px; text-align: center; letter-spacing: .15px; }

/* promo footer */
.footer { height: 47px; flex: none; border-top: 1px solid #bbb; background: #e5e5e5; display: flex; color: #1c5094; font-weight: bold; font-size: 14px; }
.f-empty { width: 320px; border-right: 1px solid #c0c0c0; }
.f-stars { width: 267px; border-right: 1px solid #c0c0c0; display: flex; align-items: center; gap: 7px; padding: 0 0 4px 39px; }
.f-confluence { width: 285px; border-right: 1px solid #c0c0c0; background: #cdcdcd; display: flex; align-items: center; gap: 10px; padding: 2px 0 0 40px; }
.f-social { display: flex; gap: 11.300px; padding: 10px 0 0 326px; }
.f-social svg { width: 24px; height: 24px; }
.f-social .f-close { width: 10px; height: 10px; margin-top: 7px; margin-left: -1px; color: #adc0d4; }
.yt { font-size: 8.500px; font-weight: bold; text-anchor: middle; }

/* desktop taskbar */
.taskbar { height: 40px; flex: none; display: flex; justify-content: space-between; background: linear-gradient(#08080a 0, #08080a 1px, #3a3e40 2px, #101112 3px, #202020 5px, #636363 7px, #4e4e4e 12px, #1c1c1c 19px, #000 24px, #000 28px, #000c18 33px, #08080e 37px, #101018 40px); }
.clock { fill: #e2e200; font-family: "DejaVu Sans", sans-serif; font-size: 14px; }
.clock .pm { fill: #222200; font-size: 11px; }
```
